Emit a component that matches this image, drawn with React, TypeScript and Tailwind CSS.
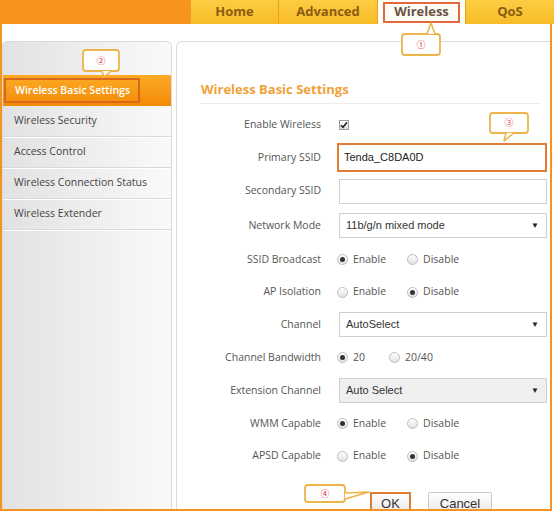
import type { ReactNode } from "react";

const tabs = [
  { label: "Home", width: "w-[88px]", active: false },
  { label: "Advanced", width: "w-[99px]", active: false },
  { label: "Wireless", width: "w-[88px]", active: true },
  { label: "QoS", width: "w-[89px]", active: false },
];

const menu = [
  "Wireless Basic Settings",
  "Wireless Security",
  "Access Control",
  "Wireless Connection Status",
  "Wireless Extender",
];

function Header() {
  return (
    <div className="flex h-[24px]">
      <div className="w-[190px] bg-[#f7941e]" />
      {tabs.map((tab) =>
        tab.active ? (
          <div
            key={tab.label}
            className={`${tab.width} flex items-center justify-center border-l border-[#e9a21c] bg-[#fffdf8]`}
          >
            <span className="flex h-[21px] w-[77px] items-center justify-center border-2 border-[#e2693c] text-[13px] font-bold text-[#6b5344]">
              {tab.label}
            </span>
          </div>
        ) : (
          <div
            key={tab.label}
            className={`${tab.width} flex items-center justify-center border-l border-[#e9a21c] bg-linear-to-b from-[#fdcd42] to-[#f8bb26] text-[13px] font-bold text-[#8a5d12]`}
          >
            {tab.label}
          </div>
        ),
      )}
    </div>
  );
}

function Sidebar() {
  return (
    <div className="w-[170px] rounded-t-[5px] border border-b-0 border-[#dadada] bg-linear-to-r from-[#e2e2e2] to-[#fafafa] pt-[33px]">
      {menu.map((item, i) =>
        i === 0 ? (
          <div
            key={item}
            className="flex h-[31px] items-center bg-linear-to-b from-[#fcab25] to-[#f28a05] px-[1px]"
          >
            <span className="flex h-[25px] w-[136px] items-center border-2 border-[#d9681a] pl-[9px] text-[10.5px] font-semibold text-white">
              {item}
            </span>
          </div>
        ) : (
          <div
            key={item}
            className="flex h-[31px] items-center border-b border-[#d9d9d9] pl-[11px] text-[10.5px] text-[#444] shadow-[0_1px_0_#ffffff]"
          >
            {item}
          </div>
        ),
      )}
    </div>
  );
}

function Row({ h, label, children }: { h: string; label: string; children: ReactNode }) {
  return (
    <div className={`flex items-center ${h}`}>
      <div className="w-[144px] text-right text-[10.5px] text-[#555]">{label}</div>
      <div className="ml-[18px] flex w-[208px] items-center">{children}</div>
    </div>
  );
}

function Radio({ checked, label }: { checked: boolean; label: string }) {
  return (
    <span className="flex items-center gap-[5px]">
      <span className="flex h-[11px] w-[11px] items-center justify-center rounded-full border border-[#bcbcbc] bg-linear-to-b from-[#ffffff] to-[#e2e2e2]">
        {checked && <span className="h-[5px] w-[5px] rounded-full bg-[#333]" />}
      </span>
      <span className="text-[10.5px] text-[#555]">{label}</span>
    </span>
  );
}

function RadioPair({ first, second, checked }: { first: string; second: string; checked: 0 | 1 }) {
  return (
    <div className="-ml-[2px] flex items-center gap-[21px]">
      <Radio checked={checked === 0} label={first} />
      <Radio checked={checked === 1} label={second} />
    </div>
  );
}

function Select({ value, disabled }: { value: string; disabled?: boolean }) {
  return (
    <div
      className={`flex h-[25px] w-full items-center justify-between border border-[#cfcfcf] pl-[6px] pr-[7px] font-['Liberation_Sans',Arial,sans-serif] text-[11px] text-[#333] ${
        disabled ? "bg-[#efefef]" : "bg-white"
      }`}
    >
      <span>{value}</span>
      <span className="text-[8px] text-[#222]">▼</span>
    </div>
  );
}

function MainPanel() {
  return (
    <div className="h-full w-[374px] overflow-hidden rounded-tl-[6px] border-l border-t border-[#dcdcdc] bg-white pt-[39px]">
      <div className="pl-[24px] text-[13px] leading-[16px] font-bold text-[#f0a137]">
        Wireless Basic Settings
      </div>
      <div className="ml-[23px] mr-[10px] mt-[6px] border-b border-[#ececec]" />
      <div className="mt-[5px]">
        <Row h="h-[32px]" label="Enable Wireless">
          <span className="flex h-[10px] w-[10px] items-center justify-center border border-[#9c9c9c] bg-linear-to-b from-[#ffffff] to-[#dedede]">
            <svg width="8" height="8" viewBox="0 0 8 8">
              <path d="M1 4.2 L3 6.3 L7 1.3" fill="none" stroke="#222" strokeWidth="1.6" />
            </svg>
          </span>
        </Row>
        <Row h="h-[33px]" label="Primary SSID">
          <div className="-ml-[2px] flex h-[29px] w-[212px] items-center border-2 border-[#e27b34] bg-white pl-[5px] font-['Liberation_Sans',Arial,sans-serif] text-[11px] text-[#222]">
            Tenda_C8DA0D
          </div>
        </Row>
        <Row h="h-[34px]" label="Secondary SSID">
          <div className="h-[25px] w-full border border-[#cfcfcf] bg-white" />
        </Row>
        <Row h="h-[35px]" label="Network Mode">
          <Select value="11b/g/n mixed mode" />
        </Row>
        <Row h="h-[33px]" label="SSID Broadcast">
          <RadioPair first="Enable" second="Disable" checked={0} />
        </Row>
        <Row h="h-[32px]" label="AP Isolation">
          <RadioPair first="Enable" second="Disable" checked={1} />
        </Row>
        <Row h="h-[33px]" label="Channel">
          <Select value="AutoSelect" />
        </Row>
        <Row h="h-[33px]" label="Channel Bandwidth">
          <div className="-ml-[2px] flex items-center gap-[24px]">
            <Radio checked label="20" />
            <Radio checked={false} label="20/40" />
          </div>
        </Row>
        <Row h="h-[33px]" label="Extension Channel">
          <Select value="Auto Select" disabled />
        </Row>
        <Row h="h-[33px]" label="WMM Capable">
          <RadioPair first="Enable" second="Disable" checked={0} />
        </Row>
        <Row h="h-[32px]" label="APSD Capable">
          <RadioPair first="Enable" second="Disable" checked={1} />
        </Row>
      </div>
      <div className="mt-[20px] flex gap-[17px] pl-[193px] font-['Liberation_Sans',Arial,sans-serif] text-[13px] text-[#333]">
        <button className="flex h-[24px] w-[41px] items-center justify-center border-2 border-[#e07b32] bg-linear-to-b from-[#ffffff] to-[#e6e6e6]">
          OK
        </button>
        <button className="flex h-[24px] w-[64px] items-center justify-center rounded-[2px] border border-[#c8c8c8] bg-linear-to-b from-[#ffffff] to-[#e6e6e6]">
          Cancel
        </button>
      </div>
    </div>
  );
}

function Callouts() {
  const stroke = "#eeb44c";
  const boxes = [
    { x: 402, y: 34, w: 38, h: 21, n: "①", tail: "M427 34 L431 23 L435 34" },
    { x: 83, y: 50, w: 36, h: 21, n: "②", tail: "M102 71 L104 77 L111 71" },
    { x: 490, y: 113, w: 38, h: 20, n: "③", tail: "M506 133 L504 141 L514 133" },
    { x: 305, y: 485, w: 40, h: 17, n: "④", tail: "M345 493 L369 492 L345 499" },
  ];
  return (
    <svg className="pointer-events-none absolute left-0 top-0" width="554" height="511">
      {boxes.map((b) => (
        <g key={b.n}>
          <rect x={b.x} y={b.y} width={b.w} height={b.h} rx="3" fill="#fff" stroke={stroke} strokeWidth="1.8" />
          <path d={b.tail} fill="#fff" stroke={stroke} strokeWidth="1.6" strokeLinejoin="round" />
          <text
            x={b.x + b.w / 2}
            y={b.y + b.h / 2 + 3}
            textAnchor="middle"
            fontSize="9"
            fill="#e0343c"
            fontFamily="'Noto Sans CJK SC', 'DejaVu Sans', sans-serif"
          >
            {b.n}
          </text>
        </g>
      ))}
    </svg>
  );
}

export default function App() {
  return (
    <div className="relative h-[511px] w-[554px] overflow-hidden bg-white font-['Open_Sans',sans-serif]">
      <Header />
      <div className="flex h-[487px] w-[552px] gap-[4px] border-x-2 border-b-2 border-[#f39322] pt-[17px]">
        <Sidebar />
        <MainPanel />
      </div>
      <Callouts />
    </div>
  );
}
